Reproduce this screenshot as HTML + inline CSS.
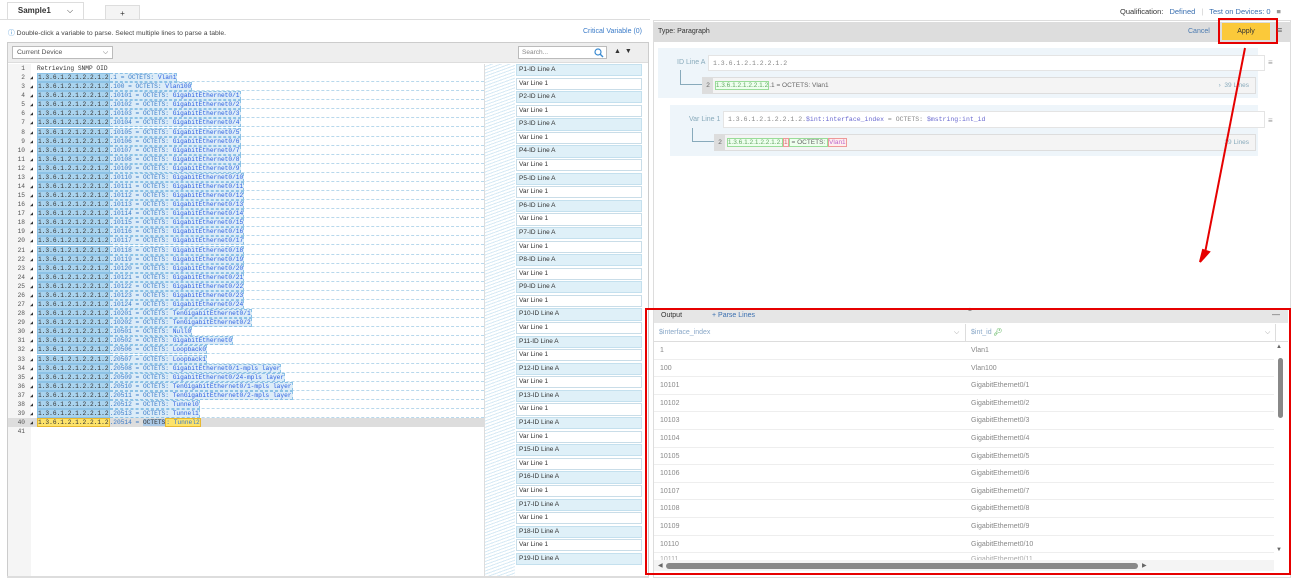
<!DOCTYPE html>
<html><head><meta charset="utf-8"><style>
*{box-sizing:border-box;margin:0;padding:0}
body{width:1298px;height:582px;background:#fff;font-family:"Liberation Sans",sans-serif;position:relative;overflow:hidden;color:#333}
.abs{position:absolute}
.tab{position:absolute;top:2px;height:17px;border:1px solid #ddd;border-bottom:none;font-size:8px;text-align:center;line-height:16px}
.code{position:absolute;left:8px;top:64px;width:476px;font-family:"Liberation Mono",monospace;font-size:6.2px}
.l{height:9.08px;line-height:9px;position:relative;white-space:pre;color:#333}
.l .n{position:absolute;left:0;width:17px;text-align:right;color:#555}
.l .t{position:absolute;left:22px;font-size:5px;top:1px}
.l .x{position:absolute;left:29px;top:0;height:9px;right:0;border-bottom:1px dashed #b8d8ec}
.l .a{background:#a9d3ee;border:1px solid #8cc2e6;}
.l .b{background:#dcecf8;border:1px dashed #8cc2e6;border-left:none;color:#3a7bc8}
.l .b i{font-style:normal;color:#2b5fe0}
.list{position:absolute;left:516px;top:64px;width:126px}
.it{height:12.2px;margin-bottom:1.4px;border:1px solid #c9dde8;font-size:6.5px;line-height:10px;padding-left:2px;background:#fff}
.it.p{background:#dff0f8;border-color:#c4e0ee}
.row{position:absolute;left:654px;width:620px;height:17.6px;border-bottom:1px solid #eee;font-size:7px;color:#888;line-height:17px}
.row span{position:absolute;left:317px}
.row b{font-weight:normal;position:absolute;left:6px}
</style></head><body>
<!-- tabs -->
<div class="tab" style="left:7px;width:77px;background:#fff;font-weight:bold;color:#333">Sample1 <span style="margin-left:14px;font-weight:normal">⌵</span></div>
<div class="tab" style="left:105px;width:35px;background:#f4f4f4;top:5px;height:14px">+</div>
<div class="abs" style="left:0;top:19px;width:650px;height:1px;background:#ddd"></div>
<div class="abs" style="left:1120px;top:7px;font-size:7.5px;color:#333">Qualification: <span style="color:#3a6fb0;margin-left:4px">Defined</span><span style="color:#ccc;margin:0 6px">|</span><span style="color:#3a6fb0">Test on Devices: 0</span><span style="margin-left:6px;color:#333">≡</span></div>

<!-- left panel -->
<div class="abs" style="left:8px;top:27px;font-size:6.8px;color:#444"><span style="color:#3a8ad0">ⓘ</span> Double-click a variable to parse. Select multiple lines to parse a table.</div>
<div class="abs" style="left:583px;top:28px;font-size:7px;color:#3a7bc8">Critical Variable (0)</div>
<div class="abs" style="left:7px;top:42px;width:642px;height:536px;border:1px solid #ccc;background:#fff"></div>
<div class="abs" style="left:8px;top:43px;width:640px;height:20px;background:#eee;border-bottom:1px solid #ddd"></div>
<div class="abs" style="left:12px;top:46px;width:101px;height:13px;border:1px solid #bbb;background:#fff;font-size:6.8px;line-height:11px;padding-left:4px;color:#555">Current Device<span style="position:absolute;right:4px">⌵</span></div>
<div class="abs" style="left:518px;top:46px;width:89px;height:13px;border:1px solid #bbb;background:#fff;font-size:6.5px;line-height:11px;padding-left:3px;color:#888">Search...<svg style="position:absolute;right:2px;top:1px" width="10" height="10"><circle cx="4" cy="4" r="3" fill="none" stroke="#3a8ad0" stroke-width="1.2"/><path d="M6 6L9 9" stroke="#3a8ad0" stroke-width="1.4"/></svg></div>
<div class="abs" style="left:614px;top:48px;font-size:7px;color:#333">▲ &nbsp;▼</div>
<div class="abs" style="left:8px;top:64px;width:23px;height:513px;background:#f5f5f5"></div>
<div class="abs" style="left:484px;top:64px;width:1px;height:513px;background:#ddd"></div>
<div class="abs" style="left:485px;top:64px;width:30px;height:513px;background:repeating-linear-gradient(160deg,#fff 0 2px,#d6eaf5 2px 3px)"></div>
<div class="abs" style="left:8px;top:418px;width:476px;height:9px;background:#ddd"></div>
<div class="code">
<div class="l"><span class="n">1</span><span style="position:absolute;left:29px">Retrieving SNMP OID</span></div>
<div class="l"><span class="n">2</span><span class="t">◢</span><span class="x"><span class="a">1.3.6.1.2.1.2.2.1.2</span><span class="b">.1 = OCTETS: <i>Vlan1</i></span></span></div>
<div class="l"><span class="n">3</span><span class="t">◢</span><span class="x"><span class="a">1.3.6.1.2.1.2.2.1.2</span><span class="b">.100 = OCTETS: <i>Vlan100</i></span></span></div>
<div class="l"><span class="n">4</span><span class="t">◢</span><span class="x"><span class="a">1.3.6.1.2.1.2.2.1.2</span><span class="b">.10101 = OCTETS: <i>GigabitEthernet0/1</i></span></span></div>
<div class="l"><span class="n">5</span><span class="t">◢</span><span class="x"><span class="a">1.3.6.1.2.1.2.2.1.2</span><span class="b">.10102 = OCTETS: <i>GigabitEthernet0/2</i></span></span></div>
<div class="l"><span class="n">6</span><span class="t">◢</span><span class="x"><span class="a">1.3.6.1.2.1.2.2.1.2</span><span class="b">.10103 = OCTETS: <i>GigabitEthernet0/3</i></span></span></div>
<div class="l"><span class="n">7</span><span class="t">◢</span><span class="x"><span class="a">1.3.6.1.2.1.2.2.1.2</span><span class="b">.10104 = OCTETS: <i>GigabitEthernet0/4</i></span></span></div>
<div class="l"><span class="n">8</span><span class="t">◢</span><span class="x"><span class="a">1.3.6.1.2.1.2.2.1.2</span><span class="b">.10105 = OCTETS: <i>GigabitEthernet0/5</i></span></span></div>
<div class="l"><span class="n">9</span><span class="t">◢</span><span class="x"><span class="a">1.3.6.1.2.1.2.2.1.2</span><span class="b">.10106 = OCTETS: <i>GigabitEthernet0/6</i></span></span></div>
<div class="l"><span class="n">10</span><span class="t">◢</span><span class="x"><span class="a">1.3.6.1.2.1.2.2.1.2</span><span class="b">.10107 = OCTETS: <i>GigabitEthernet0/7</i></span></span></div>
<div class="l"><span class="n">11</span><span class="t">◢</span><span class="x"><span class="a">1.3.6.1.2.1.2.2.1.2</span><span class="b">.10108 = OCTETS: <i>GigabitEthernet0/8</i></span></span></div>
<div class="l"><span class="n">12</span><span class="t">◢</span><span class="x"><span class="a">1.3.6.1.2.1.2.2.1.2</span><span class="b">.10109 = OCTETS: <i>GigabitEthernet0/9</i></span></span></div>
<div class="l"><span class="n">13</span><span class="t">◢</span><span class="x"><span class="a">1.3.6.1.2.1.2.2.1.2</span><span class="b">.10110 = OCTETS: <i>GigabitEthernet0/10</i></span></span></div>
<div class="l"><span class="n">14</span><span class="t">◢</span><span class="x"><span class="a">1.3.6.1.2.1.2.2.1.2</span><span class="b">.10111 = OCTETS: <i>GigabitEthernet0/11</i></span></span></div>
<div class="l"><span class="n">15</span><span class="t">◢</span><span class="x"><span class="a">1.3.6.1.2.1.2.2.1.2</span><span class="b">.10112 = OCTETS: <i>GigabitEthernet0/12</i></span></span></div>
<div class="l"><span class="n">16</span><span class="t">◢</span><span class="x"><span class="a">1.3.6.1.2.1.2.2.1.2</span><span class="b">.10113 = OCTETS: <i>GigabitEthernet0/13</i></span></span></div>
<div class="l"><span class="n">17</span><span class="t">◢</span><span class="x"><span class="a">1.3.6.1.2.1.2.2.1.2</span><span class="b">.10114 = OCTETS: <i>GigabitEthernet0/14</i></span></span></div>
<div class="l"><span class="n">18</span><span class="t">◢</span><span class="x"><span class="a">1.3.6.1.2.1.2.2.1.2</span><span class="b">.10115 = OCTETS: <i>GigabitEthernet0/15</i></span></span></div>
<div class="l"><span class="n">19</span><span class="t">◢</span><span class="x"><span class="a">1.3.6.1.2.1.2.2.1.2</span><span class="b">.10116 = OCTETS: <i>GigabitEthernet0/16</i></span></span></div>
<div class="l"><span class="n">20</span><span class="t">◢</span><span class="x"><span class="a">1.3.6.1.2.1.2.2.1.2</span><span class="b">.10117 = OCTETS: <i>GigabitEthernet0/17</i></span></span></div>
<div class="l"><span class="n">21</span><span class="t">◢</span><span class="x"><span class="a">1.3.6.1.2.1.2.2.1.2</span><span class="b">.10118 = OCTETS: <i>GigabitEthernet0/18</i></span></span></div>
<div class="l"><span class="n">22</span><span class="t">◢</span><span class="x"><span class="a">1.3.6.1.2.1.2.2.1.2</span><span class="b">.10119 = OCTETS: <i>GigabitEthernet0/19</i></span></span></div>
<div class="l"><span class="n">23</span><span class="t">◢</span><span class="x"><span class="a">1.3.6.1.2.1.2.2.1.2</span><span class="b">.10120 = OCTETS: <i>GigabitEthernet0/20</i></span></span></div>
<div class="l"><span class="n">24</span><span class="t">◢</span><span class="x"><span class="a">1.3.6.1.2.1.2.2.1.2</span><span class="b">.10121 = OCTETS: <i>GigabitEthernet0/21</i></span></span></div>
<div class="l"><span class="n">25</span><span class="t">◢</span><span class="x"><span class="a">1.3.6.1.2.1.2.2.1.2</span><span class="b">.10122 = OCTETS: <i>GigabitEthernet0/22</i></span></span></div>
<div class="l"><span class="n">26</span><span class="t">◢</span><span class="x"><span class="a">1.3.6.1.2.1.2.2.1.2</span><span class="b">.10123 = OCTETS: <i>GigabitEthernet0/23</i></span></span></div>
<div class="l"><span class="n">27</span><span class="t">◢</span><span class="x"><span class="a">1.3.6.1.2.1.2.2.1.2</span><span class="b">.10124 = OCTETS: <i>GigabitEthernet0/24</i></span></span></div>
<div class="l"><span class="n">28</span><span class="t">◢</span><span class="x"><span class="a">1.3.6.1.2.1.2.2.1.2</span><span class="b">.10201 = OCTETS: <i>TenGigabitEthernet0/1</i></span></span></div>
<div class="l"><span class="n">29</span><span class="t">◢</span><span class="x"><span class="a">1.3.6.1.2.1.2.2.1.2</span><span class="b">.10202 = OCTETS: <i>TenGigabitEthernet0/2</i></span></span></div>
<div class="l"><span class="n">30</span><span class="t">◢</span><span class="x"><span class="a">1.3.6.1.2.1.2.2.1.2</span><span class="b">.10501 = OCTETS: <i>Null0</i></span></span></div>
<div class="l"><span class="n">31</span><span class="t">◢</span><span class="x"><span class="a">1.3.6.1.2.1.2.2.1.2</span><span class="b">.10502 = OCTETS: <i>GigabitEthernet0</i></span></span></div>
<div class="l"><span class="n">32</span><span class="t">◢</span><span class="x"><span class="a">1.3.6.1.2.1.2.2.1.2</span><span class="b">.20506 = OCTETS: <i>Loopback0</i></span></span></div>
<div class="l"><span class="n">33</span><span class="t">◢</span><span class="x"><span class="a">1.3.6.1.2.1.2.2.1.2</span><span class="b">.20507 = OCTETS: <i>Loopback1</i></span></span></div>
<div class="l"><span class="n">34</span><span class="t">◢</span><span class="x"><span class="a">1.3.6.1.2.1.2.2.1.2</span><span class="b">.20508 = OCTETS: <i>GigabitEthernet0/1-mpls layer</i></span></span></div>
<div class="l"><span class="n">35</span><span class="t">◢</span><span class="x"><span class="a">1.3.6.1.2.1.2.2.1.2</span><span class="b">.20509 = OCTETS: <i>GigabitEthernet0/24-mpls layer</i></span></span></div>
<div class="l"><span class="n">36</span><span class="t">◢</span><span class="x"><span class="a">1.3.6.1.2.1.2.2.1.2</span><span class="b">.20510 = OCTETS: <i>TenGigabitEthernet0/1-mpls layer</i></span></span></div>
<div class="l"><span class="n">37</span><span class="t">◢</span><span class="x"><span class="a">1.3.6.1.2.1.2.2.1.2</span><span class="b">.20511 = OCTETS: <i>TenGigabitEthernet0/2-mpls layer</i></span></span></div>
<div class="l"><span class="n">38</span><span class="t">◢</span><span class="x"><span class="a">1.3.6.1.2.1.2.2.1.2</span><span class="b">.20512 = OCTETS: <i>Tunnel0</i></span></span></div>
<div class="l"><span class="n">39</span><span class="t">◢</span><span class="x"><span class="a">1.3.6.1.2.1.2.2.1.2</span><span class="b">.20513 = OCTETS: <i>Tunnel1</i></span></span></div>
<div class="l"><span class="n">40</span><span class="t">◢</span><span style="position:absolute;left:29px"><span style="background:#fde36a;border:1px solid #e8b830">1.3.6.1.2.1.2.2.1.2</span><span style="color:#3a7bc8">.20514 = </span><span style="background:#a9c8e6">OCTETS</span><span style="background:#fde36a;border:1px solid #e8b830;color:#3a7bc8">: Tunnel2</span></span></div>
<div class="l"><span class="n">41</span></div>
</div>
<div class="list">
<div class="it p">P1-ID Line A</div><div class="it">Var Line 1</div>
<div class="it p">P2-ID Line A</div><div class="it">Var Line 1</div>
<div class="it p">P3-ID Line A</div><div class="it">Var Line 1</div>
<div class="it p">P4-ID Line A</div><div class="it">Var Line 1</div>
<div class="it p">P5-ID Line A</div><div class="it">Var Line 1</div>
<div class="it p">P6-ID Line A</div><div class="it">Var Line 1</div>
<div class="it p">P7-ID Line A</div><div class="it">Var Line 1</div>
<div class="it p">P8-ID Line A</div><div class="it">Var Line 1</div>
<div class="it p">P9-ID Line A</div><div class="it">Var Line 1</div>
<div class="it p">P10-ID Line A</div><div class="it">Var Line 1</div>
<div class="it p">P11-ID Line A</div><div class="it">Var Line 1</div>
<div class="it p">P12-ID Line A</div><div class="it">Var Line 1</div>
<div class="it p">P13-ID Line A</div><div class="it">Var Line 1</div>
<div class="it p">P14-ID Line A</div><div class="it">Var Line 1</div>
<div class="it p">P15-ID Line A</div><div class="it">Var Line 1</div>
<div class="it p">P16-ID Line A</div><div class="it">Var Line 1</div>
<div class="it p">P17-ID Line A</div><div class="it">Var Line 1</div>
<div class="it p">P18-ID Line A</div><div class="it">Var Line 1</div>
<div class="it p">P19-ID Line A</div>
</div>
<div class="abs" style="left:7px;top:576px;width:642px;height:2px;background:#ddd"></div>

<!-- right panel -->
<div class="abs" style="left:653px;top:20px;width:638px;height:558px;border:1px solid #ddd;background:#fff"></div>
<div class="abs" style="left:654px;top:22px;width:636px;height:20px;background:#ddd"></div>
<div class="abs" style="left:658px;top:28px;font-size:7px;color:#333">Type: Paragraph</div>
<div class="abs" style="left:1188px;top:28px;font-size:7px;color:#4a7ab0">Cancel</div>
<div class="abs" style="left:1222px;top:23px;width:48px;height:17px;background:#fbc93a;font-size:7px;line-height:17px;text-align:center;color:#333">Apply</div>
<div class="abs" style="left:1218px;top:18px;width:60px;height:26px;border:2px solid #e60000"></div>
<div class="abs" style="left:1277px;top:25px;font-size:9px;color:#666">≡</div>

<div class="abs" style="left:658px;top:48px;width:600px;height:50px;background:#eef5fa"></div>
<div class="abs" style="left:677px;top:59px;font-size:7px;color:#8ab">ID Line A</div>
<div class="abs" style="left:708px;top:55px;width:557px;height:16px;background:#fff;border:1px solid #e4e4e4;font-family:'Liberation Mono',monospace;font-size:6.5px;color:#888;line-height:15px;padding-left:4px">1.3.6.1.2.1.2.2.1.2</div>
<div class="abs" style="left:1268px;top:58px;font-size:8px;color:#999">≡</div>
<div class="abs" style="left:680px;top:70px;width:22px;height:15px;border-left:1px solid #8ab;border-bottom:1px solid #8ab"></div>
<div class="abs" style="left:702px;top:77px;width:554px;height:17px;background:#f4f4f4;border:1px solid #ddd;font-size:6.5px;color:#666;line-height:15px"><span style="display:inline-block;width:10px;background:#ddd;text-align:center">2</span> <span style="border:1px solid #9d9;background:#efe;color:#6a6">1.3.6.1.2.1.2.2.1.2</span>.1 = OCTETS: Vlan1<span style="position:absolute;right:6px;color:#8ab">›&nbsp; 39 Lines</span></div>

<div class="abs" style="left:670px;top:105px;width:588px;height:51px;background:#eef5fa"></div>
<div class="abs" style="left:689px;top:116px;font-size:7px;color:#8ab">Var Line 1</div>
<div class="abs" style="left:723px;top:111px;width:542px;height:17px;background:#fff;border:1px solid #e4e4e4;font-family:'Liberation Mono',monospace;font-size:6.5px;color:#888;line-height:16px;padding-left:4px">1.3.6.1.2.1.2.2.1.2.<span style="color:#6a6ad0">$int:interface_index</span> = OCTETS: <span style="color:#6a6ad0">$mstring:int_id</span></div>
<div class="abs" style="left:1268px;top:116px;font-size:8px;color:#999">≡</div>
<div class="abs" style="left:692px;top:128px;width:22px;height:14px;border-left:1px solid #8ab;border-bottom:1px solid #8ab"></div>
<div class="abs" style="left:714px;top:134px;width:542px;height:17px;background:#f4f4f4;border:1px solid #ddd;font-size:6.5px;color:#666;line-height:15px"><span style="display:inline-block;width:10px;background:#ddd;text-align:center">2</span> <span style="border:1px solid #9d9;background:#efe;color:#6a6">1.3.6.1.2.1.2.2.1.2.</span><span style="border:1px solid #e99;background:#fee;color:#c66">1</span><span style="border:1px solid #9d9;background:#efe"> = OCTETS: </span><span style="border:1px solid #e99;background:#fee;color:#b6c">Vlan1</span><span style="position:absolute;right:6px;color:#8ab">39 Lines</span></div>

<svg class="abs" style="left:0;top:0" width="1298" height="582"><path d="M1245 48 L1204 258" stroke="#e60000" stroke-width="2"/><path d="M1200 262 L1203 250 L1209 252 Z" fill="#e60000" stroke="#e60000" stroke-width="2"/></svg>

<!-- output -->
<div class="abs" style="left:654px;top:310px;width:634px;height:13px;background:#e6e6e6"></div>
<div class="abs" style="left:661px;top:312px;font-size:7px;color:#333">Output</div>
<div class="abs" style="left:712px;top:312px;font-size:7px;color:#3a6fb0">+ Parse Lines</div>
<div class="abs" style="left:1272px;top:310px;font-size:8px;color:#555">—</div>
<div class="abs" style="left:967px;top:307px;font-size:6px;color:#999">▲</div>
<div class="abs" style="left:654px;top:324px;width:634px;height:18px;border-bottom:1px solid #ddd;font-size:7px;color:#8aa8c8;line-height:18px"><span style="position:absolute;left:5px">$interface_index</span><span style="position:absolute;left:300px;color:#999">⌵</span><span style="position:absolute;left:311px;top:0;height:18px;border-left:1px solid #ddd"></span><span style="position:absolute;left:317px">$int_id <span style="color:#4a4">🔑︎</span></span><span style="position:absolute;left:611px;color:#999">⌵</span><span style="position:absolute;left:621px;top:0;height:18px;border-left:1px solid #ddd"></span></div>
<div class="row" style="top:342px"><b>1</b><span>Vlan1</span></div>
<div class="row" style="top:359.6px"><b>100</b><span>Vlan100</span></div>
<div class="row" style="top:377.2px"><b>10101</b><span>GigabitEthernet0/1</span></div>
<div class="row" style="top:394.8px"><b>10102</b><span>GigabitEthernet0/2</span></div>
<div class="row" style="top:412.4px"><b>10103</b><span>GigabitEthernet0/3</span></div>
<div class="row" style="top:430px"><b>10104</b><span>GigabitEthernet0/4</span></div>
<div class="row" style="top:447.6px"><b>10105</b><span>GigabitEthernet0/5</span></div>
<div class="row" style="top:465.2px"><b>10106</b><span>GigabitEthernet0/6</span></div>
<div class="row" style="top:482.8px"><b>10107</b><span>GigabitEthernet0/7</span></div>
<div class="row" style="top:500.4px"><b>10108</b><span>GigabitEthernet0/8</span></div>
<div class="row" style="top:518px"><b>10109</b><span>GigabitEthernet0/9</span></div>
<div class="row" style="top:535.6px"><b>10110</b><span>GigabitEthernet0/10</span></div>
<div class="abs" style="left:654px;top:553px;width:620px;height:7px;overflow:hidden;font-size:7px;color:#aaa;line-height:14px"><span style="position:absolute;left:6px">10111</span><span style="position:absolute;left:317px">GigabitEthernet0/11</span></div>
<div class="abs" style="left:1276px;top:344px;font-size:6px;color:#666">▲</div>
<div class="abs" style="left:1278px;top:358px;width:5px;height:60px;background:#888;border-radius:3px"></div>
<div class="abs" style="left:1276px;top:547px;font-size:6px;color:#666">▼</div>
<div class="abs" style="left:654px;top:560px;width:620px;height:11px;background:#f4f4f4"></div>
<div class="abs" style="left:658px;top:562px;font-size:6px;color:#666">◀</div>
<div class="abs" style="left:665px;top:563px;width:470px;height:6px;background:#888;border-radius:3px;width:472px;left:666px"></div>
<div class="abs" style="left:1142px;top:562px;font-size:6px;color:#666">▶</div>
<div class="abs" style="left:645px;top:308px;width:646px;height:267px;border:2px solid #e60000"></div>
</body></html>
